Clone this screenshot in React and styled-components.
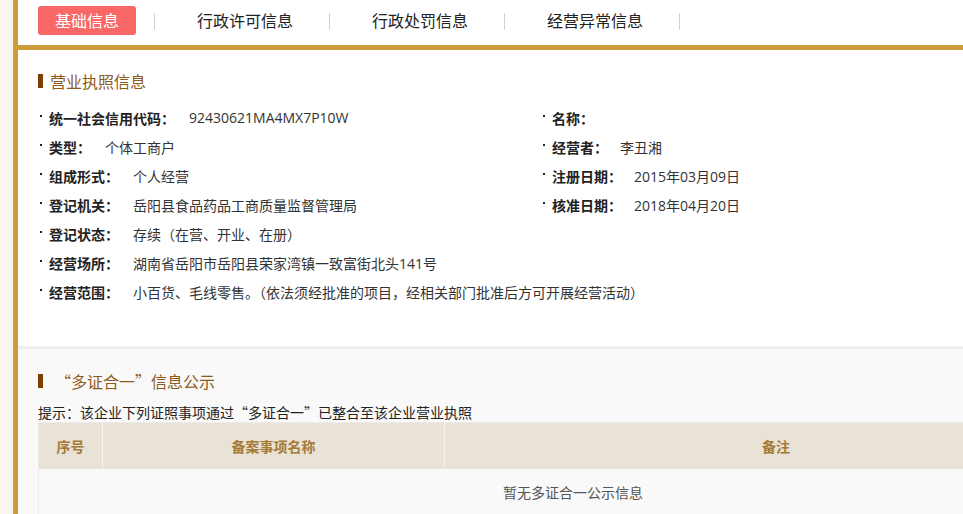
import React from "react";
import styled, { createGlobalStyle } from "styled-components";

const GlobalStyle = createGlobalStyle`
  html, body {
    margin: 0;
    padding: 0;
    background: #f9f6ee;
    overflow: hidden;
  }
  body {
    font-family: "Open Sans", "Noto Sans CJK SC", sans-serif;
    color: #333;
  }
`;

const tabs = ["基础信息", "行政许可信息", "行政处罚信息", "经营异常信息"];

const leftRows = [
  { label: "统一社会信用代码：", value: "92430621MA4MX7P10W" },
  { label: "类型：", value: "个体工商户" },
  { label: "组成形式：", value: "个人经营" },
  { label: "登记机关：", value: "岳阳县食品药品工商质量监督管理局" },
  { label: "登记状态：", value: "存续（在营、开业、在册）" },
  { label: "经营场所：", value: "湖南省岳阳市岳阳县荣家湾镇一致富街北头141号" },
  {
    label: "经营范围：",
    value: "小百货、毛线零售。（依法须经批准的项目，经相关部门批准后方可开展经营活动）",
  },
];

const rightRows = [
  { label: "名称：", value: "" },
  { label: "经营者：", value: "李丑湘" },
  { label: "注册日期：", value: "2015年03月09日" },
  { label: "核准日期：", value: "2018年04月20日" },
];

const App = () => {
  return (
    <Root>
      <GlobalStyle />
      <Strip />
      <Main>
        <TabBar>
          {tabs.map((t, i) => (
            <React.Fragment key={t}>
              {i === 0 ? <ActiveTab>{t}</ActiveTab> : <Tab>{t}</Tab>}
              <Divider />
            </React.Fragment>
          ))}
        </TabBar>

        <Panel>
          <SectionTitle>营业执照信息</SectionTitle>
          <InfoGrid>
            <Column>
              {leftRows.map((r) => (
                <Row key={r.label}>
                  <Label $gap={14}>{r.label}</Label>
                  <Value>{r.value}</Value>
                </Row>
              ))}
            </Column>
            <Column>
              {rightRows.map((r) => (
                <Row key={r.label}>
                  <Label $gap={12}>{r.label}</Label>
                  <Value>{r.value}</Value>
                </Row>
              ))}
            </Column>
          </InfoGrid>
        </Panel>

        <GrayPanel>
          <SectionTitle $quoted>“多证合一”信息公示</SectionTitle>
          <Hint>提示：该企业下列证照事项通过“多证合一”已整合至该企业营业执照</Hint>
          <Table>
            <colgroup>
              <col style={{ width: 64 }} />
              <col style={{ width: 342 }} />
              <col />
            </colgroup>
            <thead>
              <tr>
                <Th>序号</Th>
                <Th>备案事项名称</Th>
                <Th>备注</Th>
              </tr>
            </thead>
            <tbody>
              <tr>
                <Empty colSpan={3}>暂无多证合一公示信息</Empty>
              </tr>
            </tbody>
          </Table>
        </GrayPanel>
      </Main>
    </Root>
  );
};

export default App;

const Root = styled.div`
  display: flex;
  width: 1200px;
  height: 514px;
  overflow: hidden;
`;

const Strip = styled.div`
  width: 13px;
  flex: none;
  background: #f9f6ee;
`;

const Main = styled.div`
  flex: 1;
  border-left: 5px solid #cc9b3b;
  background: #fff;
  display: flex;
  flex-direction: column;
`;

const TabBar = styled.div`
  flex: none;
  box-sizing: border-box;
  height: 50px;
  border-bottom: 5px solid #cc9b3b;
  padding: 6px 0 0 20px;
  display: flex;
  align-items: flex-start;
  background: #fff;
  font-family: "Noto Sans CJK SC", sans-serif;
`;

const ActiveTab = styled.div`
  width: 98px;
  height: 29px;
  border-radius: 3px;
  background: #f96767;
  color: #fff;
  font-size: 16px;
  line-height: 29px;
  text-align: center;
  margin-right: 18px;
`;

const Tab = styled.div`
  width: 174px;
  height: 29px;
  padding-left: 6px;
  box-sizing: border-box;
  font-size: 16px;
  line-height: 29px;
  color: #222;
  text-align: center;
`;

const Divider = styled.div`
  width: 1px;
  height: 17px;
  margin-top: 7px;
  background: #d0d0d0;
`;

const Panel = styled.div`
  flex: none;
  padding: 21px 20px 40px;
  background: #fff;
  border-bottom: 3px solid #ededed;
`;

const GrayPanel = styled.div`
  flex: 1;
  padding: 22px 0 0 20px;
  background: #f9f9f9;
`;

const SectionTitle = styled.div`
  display: flex;
  align-items: center;
  font-size: 16px;
  line-height: 20px;
  color: #8e5a1c;
  font-family: "Noto Sans CJK SC", sans-serif;

  &::before {
    content: "";
    width: 5px;
    height: 14px;
    background: #7c3f00;
    margin-right: ${(p) => (p.$quoted ? "12px" : "7px")};
  }
`;

const InfoGrid = styled.div`
  display: grid;
  grid-template-columns: 503px 1fr;
  margin-top: 12px;
`;

const Column = styled.div`
  display: flex;
  flex-direction: column;
`;

const Row = styled.div`
  display: flex;
  align-items: center;
  height: 29px;
  font-size: 14px;
  padding-left: 11px;
  position: relative;

  &::before {
    content: "";
    position: absolute;
    left: 2px;
    top: 12px;
    width: 2px;
    height: 2px;
    background: #222;
  }
`;

const Label = styled.span`
  flex: none;
  font-weight: bold;
  color: #222;
  white-space: nowrap;
  font-family: "Noto Sans CJK SC", sans-serif;
  margin-right: ${(p) => p.$gap}px;
`;

const Value = styled.span`
  flex: none;
  color: #333;
  white-space: nowrap;
`;

const Hint = styled.div`
  margin-top: 12px;
  font-size: 14px;
  line-height: 19px;
  color: #222;
  font-family: "Noto Sans CJK SC", sans-serif;
`;

const Table = styled.table`
  width: 1070px;
  table-layout: fixed;
  border-collapse: collapse;
  border: 1px solid #ececec;
  font-family: "Noto Sans CJK SC", sans-serif;
`;

const Th = styled.th`
  height: 46px;
  padding: 0;
  background: #e8e2d7;
  color: #a47a35;
  font-size: 14px;
  font-weight: bold;
  border-right: 1px solid #f6f3ee;
  text-align: center;
`;

const Empty = styled.td`
  height: 46px;
  padding: 0;
  text-align: center;
  font-size: 14px;
  color: #555;
  background: #f9f9f9;
`;
